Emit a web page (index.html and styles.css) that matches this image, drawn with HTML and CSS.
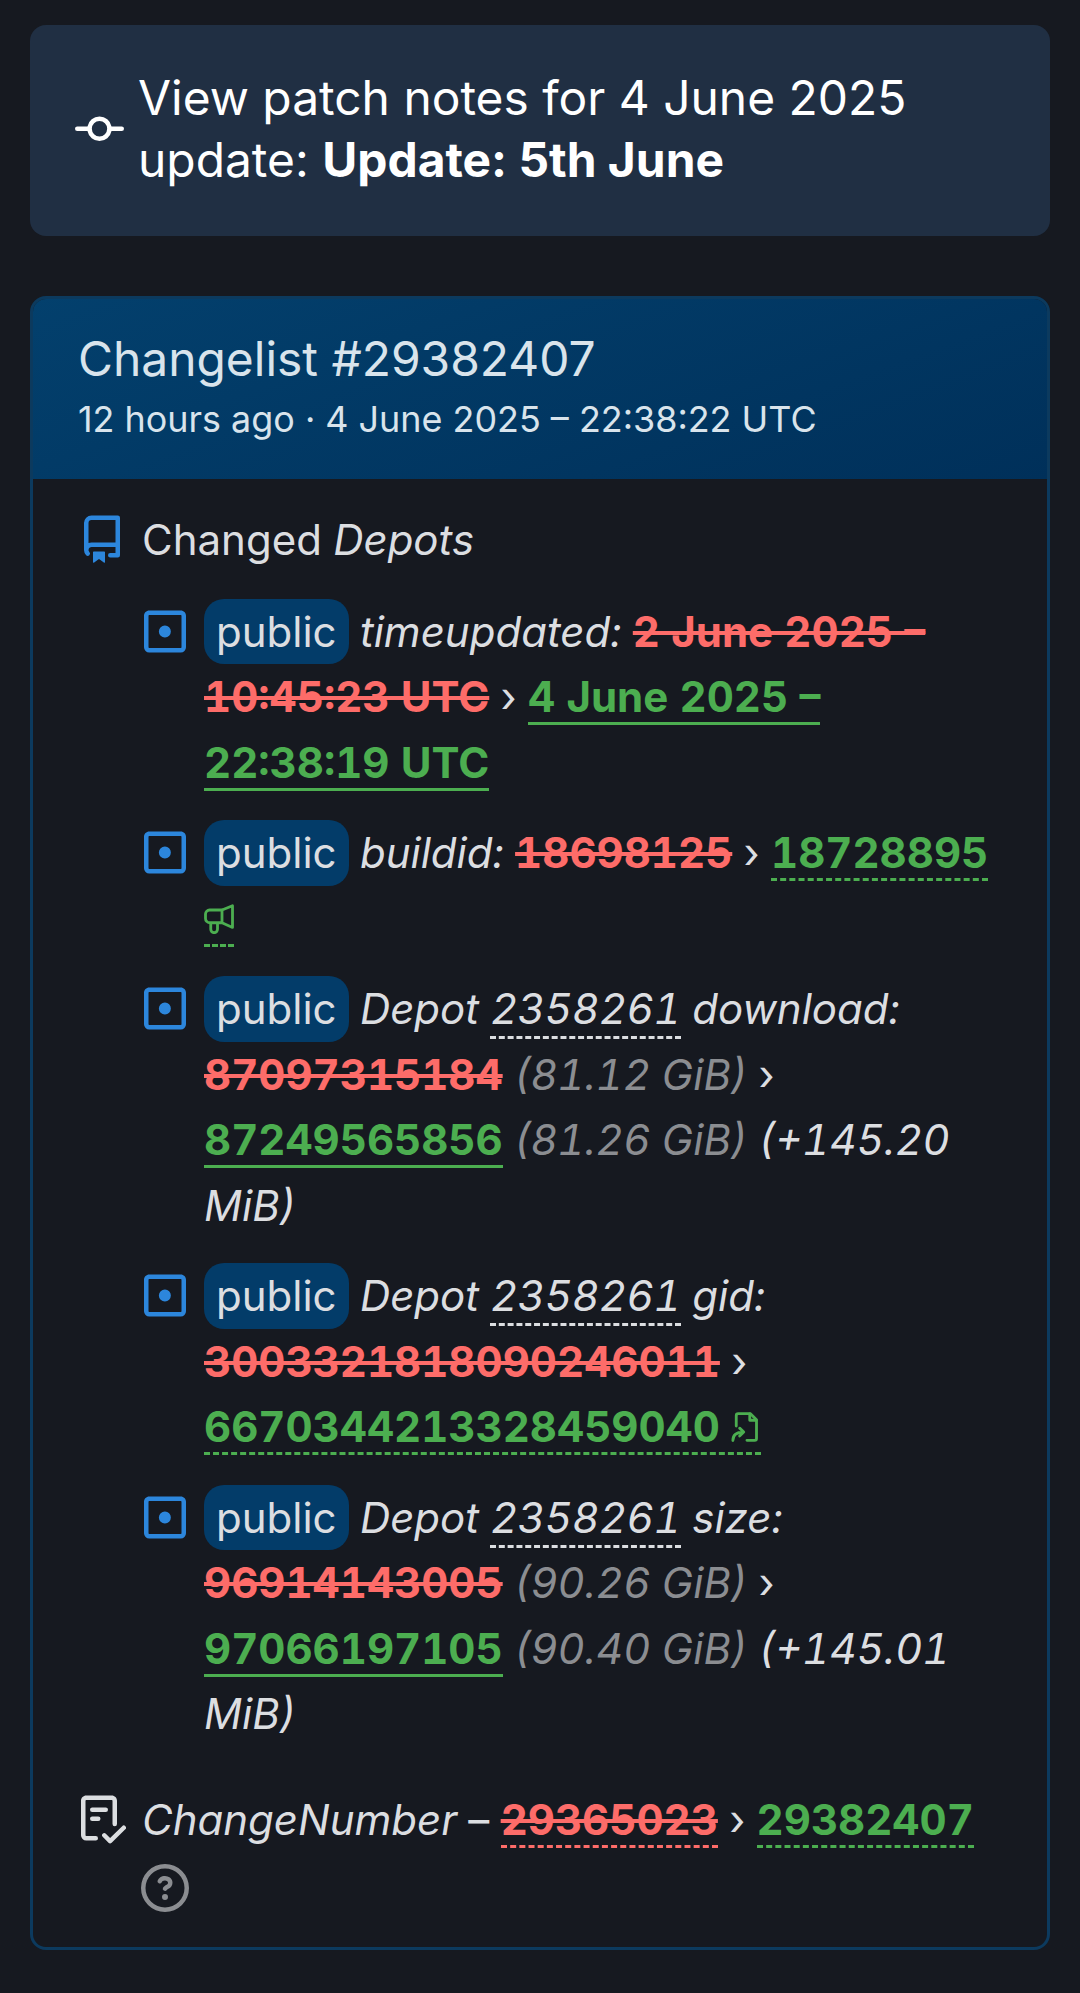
FILE: index.html
```html
<!DOCTYPE html>
<html lang="en">
<head>
  <meta charset="UTF-8" />
  <meta name="viewport" content="width=device-width, initial-scale=1.0"/>
  <title>Changelist #29382407</title>
  <link rel="stylesheet" href="styles.css">
</head>
<body>
  <a class="patch-banner" href="#">
    <svg class="banner-icon" viewBox="0 0 16 16"><path d="M11.93 8.5a4.002 4.002 0 0 1-7.86 0H.75a.75.75 0 0 1 0-1.5h3.32a4.002 4.002 0 0 1 7.86 0h3.32a.75.75 0 0 1 0 1.5Zm-1.43-.75a2.5 2.5 0 1 0-5 0 2.5 2.5 0 0 0 5 0Z"/></svg>
    <span>View patch notes for 4 June 2025 update: <b>Update: 5th June</b></span>
  </a>

  <section class="card">
    <div class="card-header">
      <h2>Changelist #29382407</h2>
      <div class="card-date">12 hours ago · 4 June 2025 – 22:38:22 UTC</div>
    </div>

    <div class="card-body">
      <div class="row">
        <svg class="icon icon-repo" viewBox="0 0 16 16"><path d="M2 2.5A2.5 2.5 0 0 1 4.5 0h8.75a.75.75 0 0 1 .75.75v12.5a.75.75 0 0 1-.75.75h-2.5a.75.75 0 0 1 0-1.5h1.75v-2h-8a1 1 0 0 0-.714 1.7.75.75 0 1 1-1.072 1.05A2.495 2.495 0 0 1 2 11.5Zm10.5-1h-8a1 1 0 0 0-1 1v6.708A2.486 2.486 0 0 1 4.5 9h8ZM5 12.25a.25.25 0 0 1 .25-.25h3.5a.25.25 0 0 1 .25.25v3.25a.25.25 0 0 1-.4.2l-1.45-1.087a.249.249 0 0 0-.3 0L5.4 15.7a.25.25 0 0 1-.4-.2Z"/></svg>
        <div class="row-text">Changed <i>Depots</i></div>
      </div>

      <ul class="depots">
        <li class="row">
          <svg class="icon icon-diff" viewBox="0 0 16 16"><use href="#diff-modified"/></svg>
          <div class="row-text"><span class="pill">public</span> <i>timeupdated:</i> <del>2 June 2025 – 10:45:23 UTC</del> <span class="arrow">›</span> <ins>4 June 2025 – 22:38:19 UTC</ins></div>
        </li>
        <li class="row">
          <svg class="icon icon-diff" viewBox="0 0 16 16"><use href="#diff-modified"/></svg>
          <div class="row-text"><span class="pill">public</span> <i>buildid:</i> <del>18698125</del> <span class="arrow">›</span> <a class="dashed-ins" href="#">18728895 <svg class="inline-icon" viewBox="0 0 16 16"><path d="M15.2.9v11.6L9.6 10H3A2.3 2.3 0 0 1 .8 7.600V5.400A2.300 2.300 0 0 1 3 3.200h6.600ZM9.600 3.200V10M3.600 10v3.500a1.800 1.800 0 0 0 3.600 0V10"/></svg></a></div>
        </li>
        <li class="row">
          <svg class="icon icon-diff" viewBox="0 0 16 16"><use href="#diff-modified"/></svg>
          <div class="row-text"><span class="pill">public</span> <i>Depot <a class="depot-link" href="#">2358261</a> download:</i> <del>87097315184</del> <i class="muted">(81.12 GiB)</i> <span class="arrow">›</span> <ins>87249565856</ins> <i class="muted">(81.26 GiB)</i> <i>(+145.20 MiB)</i></div>
        </li>
        <li class="row">
          <svg class="icon icon-diff" viewBox="0 0 16 16"><use href="#diff-modified"/></svg>
          <div class="row-text"><span class="pill">public</span> <i>Depot <a class="depot-link" href="#">2358261</a> gid:</i> <del>3003321818090246011</del> <span class="arrow">›</span> <a class="dashed-ins" href="#">6670344213328459040 <svg class="inline-icon" viewBox="0 0 16 16"><path d="M2.800 7.500V1.900c0-.6.4-1 1-1h6.600l3.200 3.200v10c0 .6-.4 1-1 1H8.500"/><path d="M10 1v3.400h3.400"/><path d="M1 15.200c0-2.800 2-4.500 5.600-4.500M4.600 8.600l2.200 2.100-2.200 2.100"/></svg></a></div>
        </li>
        <li class="row">
          <svg class="icon icon-diff" viewBox="0 0 16 16"><use href="#diff-modified"/></svg>
          <div class="row-text"><span class="pill">public</span> <i>Depot <a class="depot-link" href="#">2358261</a> size:</i> <del>96914143005</del> <i class="muted">(90.26 GiB)</i> <span class="arrow">›</span> <ins>97066197105</ins> <i class="muted">(90.40 GiB)</i> <i>(+145.01 MiB)</i></div>
        </li>
      </ul>

      <div class="row">
        <svg class="icon icon-check" viewBox="0 0 16 16"><path d="M2.5 1.750v11.500c0 .138.112.25.25.25h3.170a.75.75 0 0 1 0 1.500H2.750A1.750 1.750 0 0 1 1 13.250V1.750C1 .784 1.784 0 2.750 0h8.500C12.216 0 13 .784 13 1.750v7.736a.75.75 0 0 1-1.500 0V1.750a.25.25 0 0 0-.25-.25h-8.500a.25.25 0 0 0-.25.25Zm13.274 9.537v-.001l-4.557 4.450a.75.75 0 0 1-1.055-.008l-1.943-1.950a.75.75 0 0 1 1.062-1.058l1.419 1.425 4.026-3.932a.75.75 0 1 1 1.048 1.074ZM4.750 4h4.500a.75.75 0 0 1 0 1.500h-4.500a.75.75 0 0 1 0-1.500ZM4 7.750A.75.75 0 0 1 4.750 7h2a.75.75 0 0 1 0 1.500h-2A.75.75 0 0 1 4 7.750Z"/></svg>
        <div class="row-text"><i>ChangeNumber</i> – <a class="dashed-del" href="#">29365023</a> <span class="arrow">›</span> <a class="dashed-ins" href="#">29382407</a> <svg class="help-icon" viewBox="0 0 16 16"><path d="M0 8a8 8 0 1 1 16 0A8 8 0 0 1 0 8Zm8-6.500a6.500 6.500 0 1 0 0 13 6.500 6.500 0 0 0 0-13ZM6.920 6.085h.001a.749.749 0 1 1-1.342-.67c.169-.339.436-.701.849-.977C6.845 4.160 7.369 4 8 4a2.756 2.756 0 0 1 1.637.525c.503.377.863.965.863 1.725 0 .448-.115.830-.329 1.150-.205.307-.47.513-.692.662-.109.072-.22.138-.313.195l-.006.004a6.240 6.240 0 0 0-.26.160.952.952 0 0 0-.276.245.75.75 0 0 1-1.248-.832c.184-.264.42-.489.692-.661.103-.067.207-.132.313-.195l.007-.004c.1-.061.182-.11.258-.161a.969.969 0 0 0 .277-.245C8.960 6.514 9 6.427 9 6.250a.612.612 0 0 0-.262-.525A1.270 1.270 0 0 0 8 5.500c-.369 0-.595.09-.74.187a1.010 1.010 0 0 0-.34.398ZM9 11a1 1 0 1 1-2 0 1 1 0 0 1 2 0Z"/></svg></div>
      </div>
    </div>
  </section>

  <svg class="icon-defs" width="0" height="0">
    <symbol id="diff-modified" viewBox="0 0 16 16"><path d="M13.250 1c.966 0 1.750.784 1.750 1.750v10.500A1.750 1.750 0 0 1 13.250 15H2.750A1.750 1.750 0 0 1 1 13.250V2.750C1 1.784 1.784 1 2.750 1ZM2.750 2.500a.25.25 0 0 0-.25.25v10.500c0 .138.112.25.25.25h10.500a.25.25 0 0 0 .25-.25V2.750a.25.25 0 0 0-.25-.25ZM8 10a2 2 0 1 1-.001-3.999A2 2 0 0 1 8 10Z"/></symbol>
  </svg>
</body>
</html>
```

FILE: styles.css
```css
:root {
  --bg: #161920;
  --text: #dcdee1;
  --blue: #2c86dc;
  --red: #fd6c69;
  --green: #4cae50;
  --muted: #8b8d91;
}

html {
  background: var(--bg);
}

body {
  margin: 0;
  padding: 25px 30px 0;
  min-height: 1968px;
  box-sizing: border-box;
  font-family: "Inter", "Liberation Sans", sans-serif;
  font-size: 42px;
  line-height: 65.5px;
  font-variant-numeric: tabular-nums;
  color: var(--text);
  background: var(--bg);
}

a {
  color: inherit;
  text-decoration: none;
}

.patch-banner {
  display: flex;
  align-items: center;
  gap: 14px;
  padding: 43px 40px 45px 45px;
  border-radius: 16px;
  background: #202f43;
  color: #fff;
  font-size: 47.9px;
  line-height: 61.5px;
  font-variant-numeric: normal;
}

.banner-icon {
  flex: none;
  width: 49px;
  height: 49px;
  fill: #fff;
}

.card {
  margin-top: 60px;
  border: 3px solid #0c3a5e;
  border-radius: 16px;
  overflow: hidden;
}

.card-header {
  padding: 32px 46px 35px 48px;
  margin: -3px -3px 0;
  background: linear-gradient(160deg, #03406d, #00305a);
  color: #d9e4ec;
  font-variant-numeric: normal;
}

.card-header h2 {
  margin: 0 0 4px;
  font-size: 47.9px;
  line-height: 62px;
  font-weight: 400;
}

.card-date {
  font-size: 35.9px;
  line-height: 50px;
}

.card-body {
  padding: 28px 42px 29px 45px;
}

.row {
  display: flex;
  gap: 16px;
}

.row-text {
  flex: 1;
  min-width: 0;
}

.depots {
  list-style: none;
  margin: 0;
  padding: 26px 0 40px 63px;
}

.depots .row {
  gap: 15px;
  margin-bottom: 25px;
}

.depots .row:last-child {
  margin-bottom: 0;
}

.icon {
  flex: none;
  width: 48px;
  height: 65px;
}

.icon-repo,
.icon-diff {
  fill: var(--blue);
}

.icon-check {
  fill: var(--text);
}

.pill {
  display: inline-block;
  padding: 0 12px;
  border-radius: 20px;
  background: #033c69;
}

.muted {
  color: var(--muted);
}

del {
  color: var(--red);
  font-weight: 700;
  text-decoration-thickness: 4px;
}

ins,
.dashed-ins,
.dashed-del {
  font-weight: 700;
  text-decoration: none;
}

ins {
  color: var(--green);
  border-bottom: 3px solid var(--green);
}

.dashed-ins {
  color: var(--green);
  border-bottom: 3px dashed var(--green);
}

.dashed-del {
  color: var(--red);
  text-decoration: line-through;
  text-decoration-thickness: 4px;
  border-bottom: 3px dashed var(--red);
}

.depot-link {
  padding-bottom: 2px;
  border-bottom: 3px dashed var(--text);
}

.arrow {
  color: var(--text);
}

.inline-icon {
  width: 30px;
  height: 30px;
  vertical-align: 0;
  fill: none;
  stroke: var(--green);
  stroke-width: 1.5px;
  stroke-linecap: round;
  stroke-linejoin: round;
}

.help-icon {
  width: 48px;
  height: 48px;
  margin-left: -1px;
  vertical-align: -12px;
  fill: var(--muted);
}

.icon-defs {
  position: absolute;
}
```
